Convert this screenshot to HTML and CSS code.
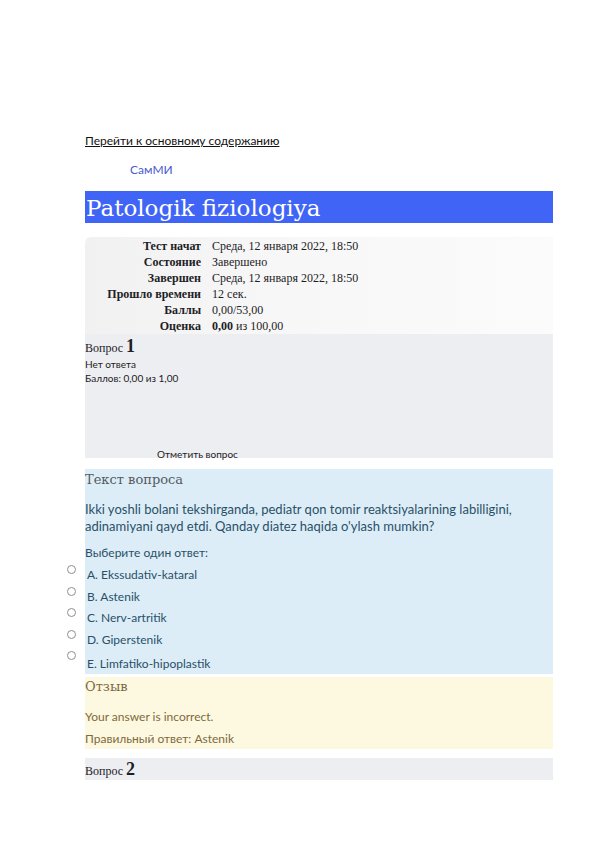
FILE: index.html
```html
<!DOCTYPE html>
<html lang="ru">
<head>
<meta charset="utf-8">
<title>Patologik fiziologiya</title>
<link rel="stylesheet" href="styles.css">
</head>
<body>
<div class="page">
  <a class="skip" href="#main">Перейти к основному содержанию</a>
  <div class="brand">СамМИ</div>
  <h1 class="title">Patologik fiziologiya</h1>
  <table class="summary">
    <tr><th>Тест начат</th><td>Среда, 12 января 2022, 18:50</td></tr>
    <tr><th>Состояние</th><td>Завершено</td></tr>
    <tr><th>Завершен</th><td>Среда, 12 января 2022, 18:50</td></tr>
    <tr><th>Прошло времени</th><td>12 сек.</td></tr>
    <tr><th>Баллы</th><td>0,00/53,00</td></tr>
    <tr><th>Оценка</th><td><b>0,00</b> из 100,00</td></tr>
  </table>
  <div class="qinfo" id="main">
    <div class="qno">Вопрос <span class="num">1</span></div>
    <div class="small">Нет ответа</div>
    <div class="small">Баллов: 0,00 из 1,00</div>
    <div class="flag">Отметить вопрос</div>
  </div>
  <div class="formulation">
    <h4 class="sechead">Текст вопроса</h4>
    <p class="qtext">Ikki yoshli bolani tekshirganda, pediatr qon tomir reaktsiyalarining labilligini, adinamiyani qayd etdi. Qanday diatez haqida o'ylash mumkin?</p>
    <p class="prompt">Выберите один ответ:</p>
    <div class="answers">
      <div class="opt"><span class="radio"></span>A. Ekssudativ-kataral</div>
      <div class="opt"><span class="radio"></span>B. Astenik</div>
      <div class="opt"><span class="radio"></span>C. Nerv-artritik</div>
      <div class="opt"><span class="radio"></span>D. Giperstenik</div>
      <div class="opt last"><span class="radio"></span>E. Limfatiko-hipoplastik</div>
    </div>
  </div>
  <div class="feedback">
    <h4 class="sechead fb">Отзыв</h4>
    <p class="fbtext">Your answer is incorrect.</p>
    <p class="fbtext right">Правильный ответ: Astenik</p>
  </div>
  <div class="qinfo2">
    <div class="qno">Вопрос <span class="num">2</span></div>
  </div>
</div>
</body>
</html>
```
FILE: styles.css
```css
html, body {
  margin: 0;
  padding: 0;
  background: #ffffff;
}
body {
  font-family: Lato, "Liberation Sans", sans-serif;
  color: #1d2125;
}
.page {
  width: 468px;
  margin-left: 85px;
  padding-top: 133px;
}
.skip {
  display: block;
  font-size: 12px;
  line-height: 16px;
  color: #111;
  text-decoration: underline;
}
.brand {
  margin-top: 13px;
  margin-left: 45px;
  font-size: 12px;
  line-height: 16px;
  color: #4a5ccf;
}
.title {
  margin: 13px 0 0 0;
  height: 32px;
  background: #3f64f6;
  color: #ffffff;
  font-family: "DejaVu Serif", "Liberation Serif", serif;
  font-weight: normal;
  font-size: 23px;
  line-height: 34px;
  padding-left: 1px;
  overflow: hidden;
}
.summary {
  margin-top: 14px;
  width: 100%;
  border-collapse: collapse;
  font-family: "Liberation Serif", serif;
  font-size: 12px;
  background: linear-gradient(90deg, #f1f1f1 0%, #f7f7f7 40%, #fbfbfb 100%);
  border-radius: 6px 0 0 0;
}
.summary th {
  width: 116px;
  text-align: right;
  font-weight: bold;
  padding: 0 5px 0 0;
  height: 16px;
  line-height: 16px;
  white-space: nowrap;
}
.summary td {
  padding: 0 0 0 6px;
  height: 16px;
  line-height: 16px;
}
.summary tr:first-child th, .summary tr:first-child td { padding-top: 1px; }
.qinfo {
  background: #eceef1;
  height: 124px;
  padding-top: 3px;
  box-sizing: border-box;
}
.qno {
  font-family: "Liberation Serif", serif;
  font-size: 12px;
  line-height: 18px;
}
.num {
  font-size: 18px;
  font-weight: bold;
}
.small {
  font-size: 10px;
  line-height: 14px;
}
.flag {
  margin-top: 62px;
  margin-left: 72px;
  font-size: 10px;
  line-height: 14px;
}
.formulation {
  margin-top: 11px;
  background: #dcedf7;
  padding: 2px 0 1px 0;
  color: #2f5a75;
}
.sechead {
  margin: 0;
  font-family: "DejaVu Serif", "Liberation Serif", serif;
  font-weight: normal;
  font-size: 13px;
  line-height: 17px;
  color: #555a60;
}
.qtext {
  margin: 13px 0 0 0;
  font-size: 13px;
  line-height: 17px;
  color: #2a5068;
}
.prompt {
  margin: 10px 0 0 0;
  font-size: 12px;
  line-height: 16px;
  color: #2a5068;
}
.answers {
  margin-top: 3px;
}
.opt {
  position: relative;
  font-size: 12px;
  line-height: 16px;
  padding: 3px 0 2.5px 2px;
  color: #2a5068;
}
.opt.last { padding-top: 5.5px; padding-bottom: 1px; }
.radio {
  position: absolute;
  left: -18px;
  top: 1px;
  width: 7px;
  height: 7px;
  border: 1.5px solid #8a8f94;
  border-radius: 50%;
  background: #fff;
}
.feedback {
  margin-top: 3px;
  background: #fdf8e0;
  padding: 1px 0 2px 0;
  color: #8a6d3b;
}
.sechead.fb { color: #7b6a45; }
.fbtext {
  margin: 0;
  font-size: 12px;
  line-height: 16px;
  color: #7d6a3c;
}
.fbtext:first-of-type { margin-top: 14px; }
.fbtext.right { margin-top: 6px; }
.qinfo2 {
  margin-top: 9px;
  background: #eceef1;
  height: 22px;
  padding-top: 2px;
  box-sizing: border-box;
}
```
